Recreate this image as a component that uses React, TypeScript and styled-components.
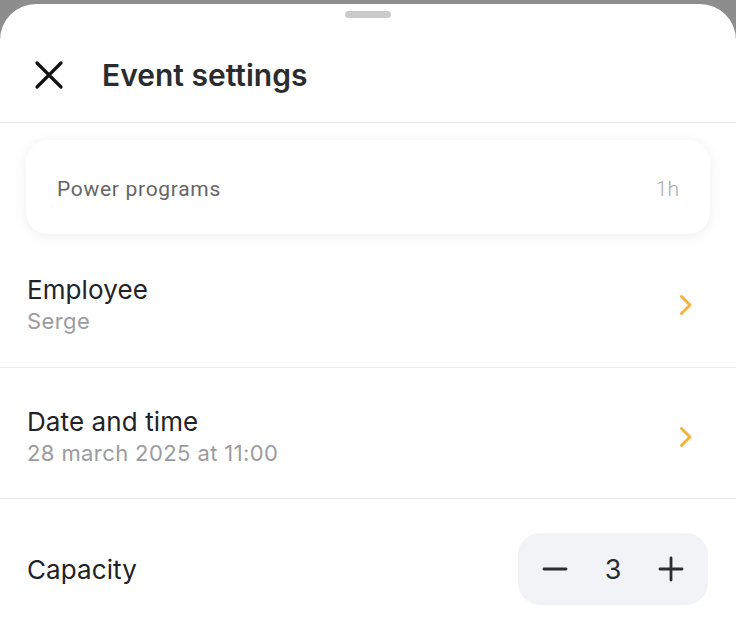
import * as React from "react";
import styled, { createGlobalStyle } from "styled-components";

const GlobalStyle = createGlobalStyle`
    html, body {
        margin: 0;
        padding: 0;
        background: #8d8d8d;
        font-family: Inter, "Noto Sans", sans-serif;
    }
`;

const Sheet = styled.div`
    margin-top: 4px;
    min-height: 626px;
    background: #fff;
    border-radius: 36px 36px 0 0;
    display: flex;
    flex-direction: column;

    & > * {
        flex-shrink: 0;
    }
`;

const Handle = styled.div`
    align-self: center;
    width: 46px;
    height: 7px;
    margin-top: 7px;
    border-radius: 4px;
    background: #cbcbcb;
`;

const Header = styled.div`
    display: flex;
    align-items: center;
    gap: 38px;
    height: 96px;
    margin-top: 9px;
    padding: 0 34px;
    border-bottom: 1px solid #ededed;
    box-sizing: border-box;
`;

const Title = styled.h1`
    margin: 0;
    font-size: 30px;
    font-weight: 600;
    color: #2b2c30;
`;

const Card = styled.div`
    display: flex;
    align-items: center;
    justify-content: space-between;
    margin: 17px 26px 0;
    height: 94px;
    padding: 3px 31px 0;
    box-sizing: border-box;
    border-radius: 22px;
    background: #fff;
    box-shadow: 0 2px 14px rgba(0, 0, 0, 0.07);
`;

const CardName = styled.span`
    font-family: Roboto, "Noto Sans", sans-serif;
    font-size: 21px;
    letter-spacing: 0.7px;
    color: #656565;
`;

const CardDuration = styled.span`
    font-family: Roboto, "Noto Sans", sans-serif;
    font-size: 21px;
    font-weight: 300;
    color: #a9a9a9;
`;

const Row = styled.div<{ $divider?: boolean; $height: number }>`
    display: flex;
    align-items: center;
    justify-content: space-between;
    height: ${p => p.$height}px;
    padding: 0 43px 0 27px;
    box-sizing: border-box;
    border-bottom: ${p => (p.$divider ? "1px solid #ededed" : "none")};
`;

const RowText = styled.div`
    display: flex;
    flex-direction: column;
    gap: 3px;
    padding-top: 6px;
`;

const RowTitle = styled.span`
    font-size: 26px;
    letter-spacing: 0.1px;
    color: #222326;
`;

const RowValue = styled.span`
    font-size: 22px;
    letter-spacing: 0.4px;
    color: #9b9ca0;
`;

const ChevronBox = styled.span`
    display: flex;
    padding-top: 8px;
`;

const Stepper = styled.div`
    display: flex;
    align-items: center;
    justify-content: space-between;
    width: 190px;
    height: 72px;
    padding: 0 24px;
    box-sizing: border-box;
    border-radius: 22px;
    background: #f1f3f6;
    margin-right: -15px;
`;

const Count = styled.span`
    font-size: 27px;
    color: #2b2c30;
`;

const Close = () => (
    <svg width="30" height="30" viewBox="0 0 30 30">
        <path d="M3 3 L27 27 M27 3 L3 27" stroke="#111" strokeWidth="3.2" strokeLinecap="round" />
    </svg>
);

const Chevron = () => (
    <ChevronBox>
        <svg width="14" height="22" viewBox="0 0 14 22">
            <path d="M2.5 2.5 L11 11 L2.5 19.5" fill="none" stroke="#f1b43e" strokeWidth="3" strokeLinecap="round" strokeLinejoin="round" />
        </svg>
    </ChevronBox>
);

const Minus = () => (
    <svg width="26" height="26" viewBox="0 0 26 26">
        <path d="M2 13 H24" stroke="#2b2c30" strokeWidth="2.8" strokeLinecap="round" />
    </svg>
);

const Plus = () => (
    <svg width="26" height="26" viewBox="0 0 26 26">
        <path d="M2 13 H24 M13 2 V24" stroke="#2b2c30" strokeWidth="2.8" strokeLinecap="round" />
    </svg>
);

export default function App() {
    return (
        <>
            <GlobalStyle />
            <Sheet>
                <Handle />
                <Header>
                    <Close />
                    <Title>Event settings</Title>
                </Header>
                <Card>
                    <CardName>Power programs</CardName>
                    <CardDuration>1h</CardDuration>
                </Card>
                <Row $divider $height={134}>
                    <RowText>
                        <RowTitle>Employee</RowTitle>
                        <RowValue>Serge</RowValue>
                    </RowText>
                    <Chevron />
                </Row>
                <Row $divider $height={131}>
                    <RowText>
                        <RowTitle>Date and time</RowTitle>
                        <RowValue>28 march 2025 at 11:00</RowValue>
                    </RowText>
                    <Chevron />
                </Row>
                <Row $height={140}>
                    <RowTitle>Capacity</RowTitle>
                    <Stepper>
                        <Minus />
                        <Count>3</Count>
                        <Plus />
                    </Stepper>
                </Row>
            </Sheet>
        </>
    );
}
